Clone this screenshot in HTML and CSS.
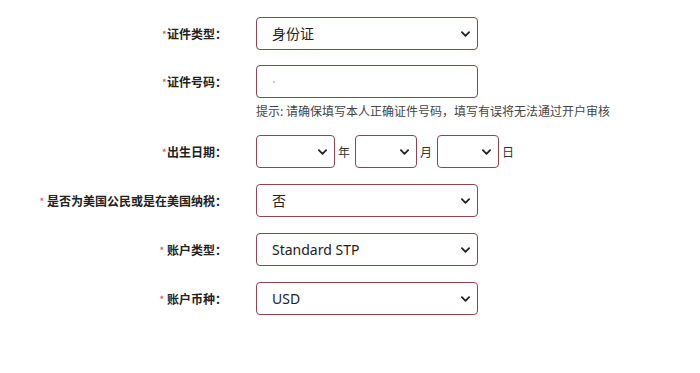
FILE: index.html
```html
<!DOCTYPE html>
<html lang="zh-CN">
<head>
    <meta charset="UTF-8">
    <meta name="viewport" content="width=device-width, initial-scale=1.0">
    <title>开户信息</title>
    <link rel="stylesheet" href="styles.css">
</head>
<body>
    <form class="form">
        <div class="row row-first">
            <label class="label"><span class="star">*</span>证件类型：</label>
            <div class="field">
                <div class="select-wrap">
                    <select class="select"><option>身份证</option></select>
                    <svg class="chev" viewBox="0 0 10 6"><path d="M1 1l4 4 4-4"/></svg>
                </div>
            </div>
        </div>

        <div class="row row-hint">
            <label class="label"><span class="star">*</span>证件号码：</label>
            <div class="field">
                <input class="input" type="text" value="·">
                <p class="hint">提示: 请确保填写本人正确证件号码，填写有误将无法通过开户审核</p>
            </div>
        </div>

        <div class="row">
            <label class="label"><span class="star">*</span>出生日期：</label>
            <div class="field date">
                <div class="select-wrap year">
                    <select class="select"><option></option></select>
                    <svg class="chev" viewBox="0 0 10 6"><path d="M1 1l4 4 4-4"/></svg>
                </div>
                <span class="unit">年</span>
                <div class="select-wrap small">
                    <select class="select"><option></option></select>
                    <svg class="chev" viewBox="0 0 10 6"><path d="M1 1l4 4 4-4"/></svg>
                </div>
                <span class="unit">月</span>
                <div class="select-wrap small">
                    <select class="select"><option></option></select>
                    <svg class="chev" viewBox="0 0 10 6"><path d="M1 1l4 4 4-4"/></svg>
                </div>
                <span class="unit">日</span>
            </div>
        </div>

        <div class="row">
            <label class="label"><span class="star">*</span> 是否为美国公民或是在美国纳税：</label>
            <div class="field">
                <div class="select-wrap">
                    <select class="select"><option>否</option></select>
                    <svg class="chev" viewBox="0 0 10 6"><path d="M1 1l4 4 4-4"/></svg>
                </div>
            </div>
        </div>

        <div class="row">
            <label class="label"><span class="star">*</span> 账户类型：</label>
            <div class="field">
                <div class="select-wrap">
                    <select class="select"><option>Standard STP</option></select>
                    <svg class="chev" viewBox="0 0 10 6"><path d="M1 1l4 4 4-4"/></svg>
                </div>
            </div>
        </div>

        <div class="row">
            <label class="label"><span class="star">*</span> 账户币种：</label>
            <div class="field">
                <div class="select-wrap">
                    <select class="select"><option>USD</option></select>
                    <svg class="chev" viewBox="0 0 10 6"><path d="M1 1l4 4 4-4"/></svg>
                </div>
            </div>
        </div>
    </form>
</body>
</html>
```

FILE: styles.css
```css
body {
    margin: 0;
    background: #fff;
    font-family: "Noto Sans CJK SC", "Noto Sans", sans-serif;
    color: #222;
}

.form {
    padding-top: 17px;
    display: flex;
    flex-direction: column;
    gap: 16px;
}

.row {
    display: flex;
    align-items: flex-start;
}

.row-first {
    margin-bottom: -1px;
}

.label {
    width: 227px;
    height: 33px;
    line-height: 33px;
    text-align: right;
    font-size: 12px;
    font-weight: bold;
    color: #222;
    margin-right: 29px;
    white-space: nowrap;
}

.star {
    color: #d9534f;
    font-weight: normal;
    font-size: 11px;
}

.field {
    display: flex;
    flex-direction: column;
}

.select-wrap {
    position: relative;
    width: 222px;
    height: 33px;
}

.select,
.input {
    box-sizing: border-box;
    width: 100%;
    height: 33px;
    border: 1px solid #8a4650;
    border-radius: 4px;
    background: #fff;
    padding: 0 24px 0 15px;
    font-family: "Noto Sans", "Noto Sans CJK SC", sans-serif;
    font-size: 14px;
    color: #222;
    -webkit-appearance: none;
    appearance: none;
    outline: none;
}

.input {
    width: 222px;
    color: #bbb;
}

.chev {
    position: absolute;
    right: 8px;
    top: 14px;
    width: 9px;
    height: 6px;
    fill: none;
    stroke: #222;
    stroke-width: 2;
    stroke-linecap: round;
    stroke-linejoin: round;
    pointer-events: none;
}

.hint {
    margin: 5px 0 0;
    font-size: 12px;
    color: #444;
    white-space: nowrap;
    line-height: 16px;
}

.date {
    flex-direction: row;
    align-items: center;
}

.select-wrap.year {
    width: 79px;
}

.select-wrap.small {
    width: 62px;
}

.unit {
    font-size: 12px;
    color: #333;
    margin: 0 3px 0 3px;
    width: 14px;
}
```
